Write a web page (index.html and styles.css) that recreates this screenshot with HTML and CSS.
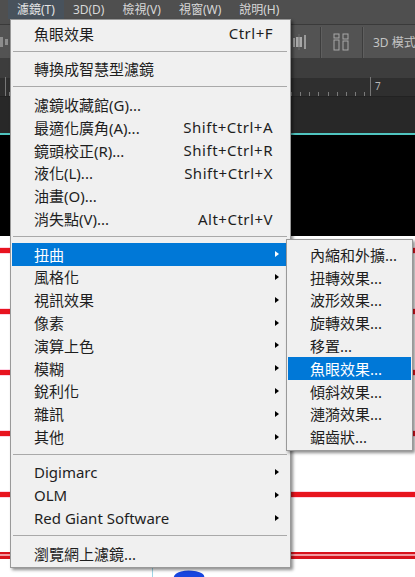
FILE: index.html
```html
<!DOCTYPE html>
<html lang="zh-Hant">
<head>
<meta charset="utf-8">
<title>濾鏡選單</title>
<link rel="stylesheet" href="styles.css">
</head>
<body>
<div class="app">
  <div class="menubar">
    <span class="mb active">濾鏡(T)</span>
    <span class="mb">3D(D)</span>
    <span class="mb">檢視(V)</span>
    <span class="mb">視窗(W)</span>
    <span class="mb">說明(H)</span>
  </div>
  <div class="optbar">
    <svg class="oicon-left" width="9" height="12" viewBox="0 0 9 12"><rect x="0" y="1" width="3" height="10" fill="#8d8d8d"/><rect x="5" y="3" width="3" height="6" fill="#8d8d8d"/></svg>
    <div class="opt-right">
      <svg class="oicon" width="14" height="16" viewBox="0 0 14 16"><rect x="0" y="4" width="2" height="9" fill="#9a9a9a"/><rect x="3" y="3" width="6" height="10" fill="#a8a8a8"/><line x1="6" y1="0" x2="6" y2="16" stroke="#6e6e6e" stroke-width="1"/><rect x="11" y="1" width="2" height="14" fill="#9a9a9a"/></svg>
      <span class="vsep"></span>
      <svg class="oicon" width="16" height="18" viewBox="0 0 16 18"><rect x="1" y="1" width="5" height="4" fill="none" stroke="#a8a8a8"/><rect x="1" y="7" width="5" height="10" fill="none" stroke="#a8a8a8"/><rect x="10" y="1" width="5" height="5" fill="none" stroke="#a8a8a8"/><rect x="10" y="8" width="5" height="9" fill="none" stroke="#a8a8a8"/></svg>
      <span class="vsep"></span>
      <span class="mode">3D 模式</span>
    </div>
  </div>
  <div class="tabbar"></div>
  <div class="ruler">
    <span class="rtick first"></span>
    <span class="minor"></span>
    <span class="rtick major"></span>
    <span class="rnum">7</span>
  </div>
  <div class="paste"></div>
  <div class="cyan"></div>
  <div class="black"></div>
  <div class="canvas">
    <div class="red l1"></div>
    <div class="red"></div>
    <div class="red"></div>
    <div class="red"></div>
    <div class="red"></div>
    <div class="red double"></div>
    <div class="guide"></div>
    <div class="blob"></div>
  </div>
</div>

<div class="menu main">
  <div class="mi"><span class="lbl">魚眼效果</span><span class="sc">Ctrl+F</span></div>
  <div class="sep"></div>
  <div class="mi"><span class="lbl">轉換成智慧型濾鏡</span></div>
  <div class="sep"></div>
  <div class="mi"><span class="lbl">濾鏡收藏館(G)...</span></div>
  <div class="mi"><span class="lbl">最適化廣角(A)...</span><span class="sc">Shift+Ctrl+A</span></div>
  <div class="mi"><span class="lbl">鏡頭校正(R)...</span><span class="sc">Shift+Ctrl+R</span></div>
  <div class="mi"><span class="lbl">液化(L)...</span><span class="sc">Shift+Ctrl+X</span></div>
  <div class="mi"><span class="lbl">油畫(O)...</span></div>
  <div class="mi"><span class="lbl">消失點(V)...</span><span class="sc">Alt+Ctrl+V</span></div>
  <div class="sep"></div>
  <div class="mi hl"><span class="lbl">扭曲</span><span class="arrow"></span></div>
  <div class="mi"><span class="lbl">風格化</span><span class="arrow"></span></div>
  <div class="mi"><span class="lbl">視訊效果</span><span class="arrow"></span></div>
  <div class="mi"><span class="lbl">像素</span><span class="arrow"></span></div>
  <div class="mi"><span class="lbl">演算上色</span><span class="arrow"></span></div>
  <div class="mi"><span class="lbl">模糊</span><span class="arrow"></span></div>
  <div class="mi"><span class="lbl">銳利化</span><span class="arrow"></span></div>
  <div class="mi"><span class="lbl">雜訊</span><span class="arrow"></span></div>
  <div class="mi"><span class="lbl">其他</span><span class="arrow"></span></div>
  <div class="sep"></div>
  <div class="mi"><span class="lbl">Digimarc</span><span class="arrow"></span></div>
  <div class="mi"><span class="lbl">OLM</span><span class="arrow"></span></div>
  <div class="mi"><span class="lbl">Red Giant Software</span><span class="arrow"></span></div>
  <div class="sep"></div>
  <div class="mi"><span class="lbl">瀏覽網上濾鏡...</span></div>
</div>

<div class="menu sub">
  <div class="mi"><span class="lbl">內縮和外擴...</span></div>
  <div class="mi"><span class="lbl">扭轉效果...</span></div>
  <div class="mi"><span class="lbl">波形效果...</span></div>
  <div class="mi"><span class="lbl">旋轉效果...</span></div>
  <div class="mi"><span class="lbl">移置...</span></div>
  <div class="mi hl"><span class="lbl">魚眼效果...</span></div>
  <div class="mi"><span class="lbl">傾斜效果...</span></div>
  <div class="mi"><span class="lbl">漣漪效果...</span></div>
  <div class="mi"><span class="lbl">鋸齒狀...</span></div>
</div>
</body>
</html>
```

FILE: styles.css
```css
* { box-sizing: border-box; }
html, body {
  margin: 0;
  padding: 0;
  width: 415px;
  height: 577px;
  overflow: hidden;
}
body {
  font-family: "Noto Sans", "Noto Sans CJK TC", sans-serif;
  position: relative;
  background: #fff;
}

.app {
  display: flex;
  flex-direction: column;
  height: 577px;
}

/* top menubar */
.menubar {
  height: 25px;
  background: #4f4f4f;
  border-bottom: 1px solid #3a3a3a;
  display: flex;
  align-items: flex-start;
  padding-left: 8px;
  font-size: 12px;
  color: #d8d8d8;
  white-space: nowrap;
}
.mb {
  height: 19px;
  line-height: 19px;
  padding: 0 9px;
}
.mb.active {
  background: #48525c;
  color: #e4e4e4;
}

/* options bar */
.optbar {
  height: 33px;
  background: #535353;
  display: flex;
  align-items: center;
  white-space: nowrap;
  overflow: hidden;
}
.oicon-left { flex: none; }
.opt-right {
  display: flex;
  align-items: center;
  margin-left: 284px;
  height: 100%;
  flex: none;
}
.oicon { display: block; flex: none; }
.vsep {
  width: 2px;
  align-self: stretch;
  margin: 2px 11px 0 13px;
  border-left: 1px solid #3d3d3d;
  border-right: 1px solid #5f5f5f;
  flex: none;
}
.mode {
  font-size: 12px;
  color: #c4c4c4;
  margin-left: -2px;
  white-space: nowrap;
  flex: none;
}

.tabbar {
  height: 20px;
  background: #3d3d3d;
}

/* ruler */
.ruler {
  height: 19px;
  background: #2f2f2f;
  border-bottom: 1px solid #222;
  display: flex;
  align-items: flex-end;
}
.rtick {
  width: 1px;
  height: 19px;
  background: #777;
}
.rtick.first { margin-left: 5px; }
.minor {
  flex: 0 0 364px;
  height: 4px;
  background: repeating-linear-gradient(to right, transparent 0 3px, #7a7a7a 3px 4px, transparent 4px 9.1px);
}
.rnum {
  align-self: flex-start;
  font-size: 10px;
  color: #b8b8b8;
  margin: 3px 0 0 4px;
  line-height: 10px;
}

.paste {
  height: 36px;
  background: #282828;
}
.cyan {
  height: 2px;
  background: #4fc4bf;
}
.black {
  height: 101px;
  background: #000;
}

/* canvas */
.canvas {
  flex: 1;
  background: #fff;
  position: relative;
  display: flex;
  flex-direction: column;
}
.red {
  height: 5px;
  background: #e8141f;
  margin-top: 56px;
  box-shadow: 0 0 1px #f06;
}
.red.l1 { margin-top: 12px; }
.red.double {
  height: 7px;
  margin-top: 55px;
  background: #f19aa0;
  border-top: 2px solid #d8121c;
  border-bottom: 3px solid #d8121c;
  box-shadow: none;
}
.guide {
  position: absolute;
  left: 152px;
  top: 331px;
  width: 1px;
  height: 12px;
  background: #9fd6e6;
}
.blob {
  position: absolute;
  left: 174px;
  top: 334px;
  width: 30px;
  height: 14px;
  background: #1746e0;
  border-radius: 70% 30% 0 0;
  transform: rotate(10deg);
}

/* menus */
.menu {
  position: absolute;
  background: #f0f0f0;
  border: 1px solid #999;
  box-shadow: 2px 2px 3px rgba(0, 0, 0, 0.45);
  padding: 2px 0;
  font-size: 15px;
  color: #1e1e1e;
}
.menu.main {
  left: 10px;
  top: 19px;
  width: 281px;
}
.menu.sub {
  left: 286px;
  top: 239px;
  width: 127px;
  padding-top: 3px;
}
.mi {
  height: 22.8px;
  margin: 0 1px;
  padding-left: 22px;
  display: flex;
  align-items: center;
  white-space: nowrap;
}
.mi .lbl { flex: 1; }
.mi.hl {
  background: #0078d7;
  color: #fff;
}
.sc {
  margin-right: 16px;
  letter-spacing: 0.5px;
}
.arrow {
  width: 0;
  height: 0;
  border-left: 4px solid #000;
  border-top: 3.5px solid transparent;
  border-bottom: 3.5px solid transparent;
  margin-right: 10px;
}
.mi.hl .arrow { border-left-color: #fff; }
.sep {
  height: 12.8px;
  margin: 0 3px 0 2px;
  display: flex;
  align-items: center;
}
.sep::before {
  content: "";
  flex: 1;
  height: 1px;
  background: #a9a9a9;
}
```
